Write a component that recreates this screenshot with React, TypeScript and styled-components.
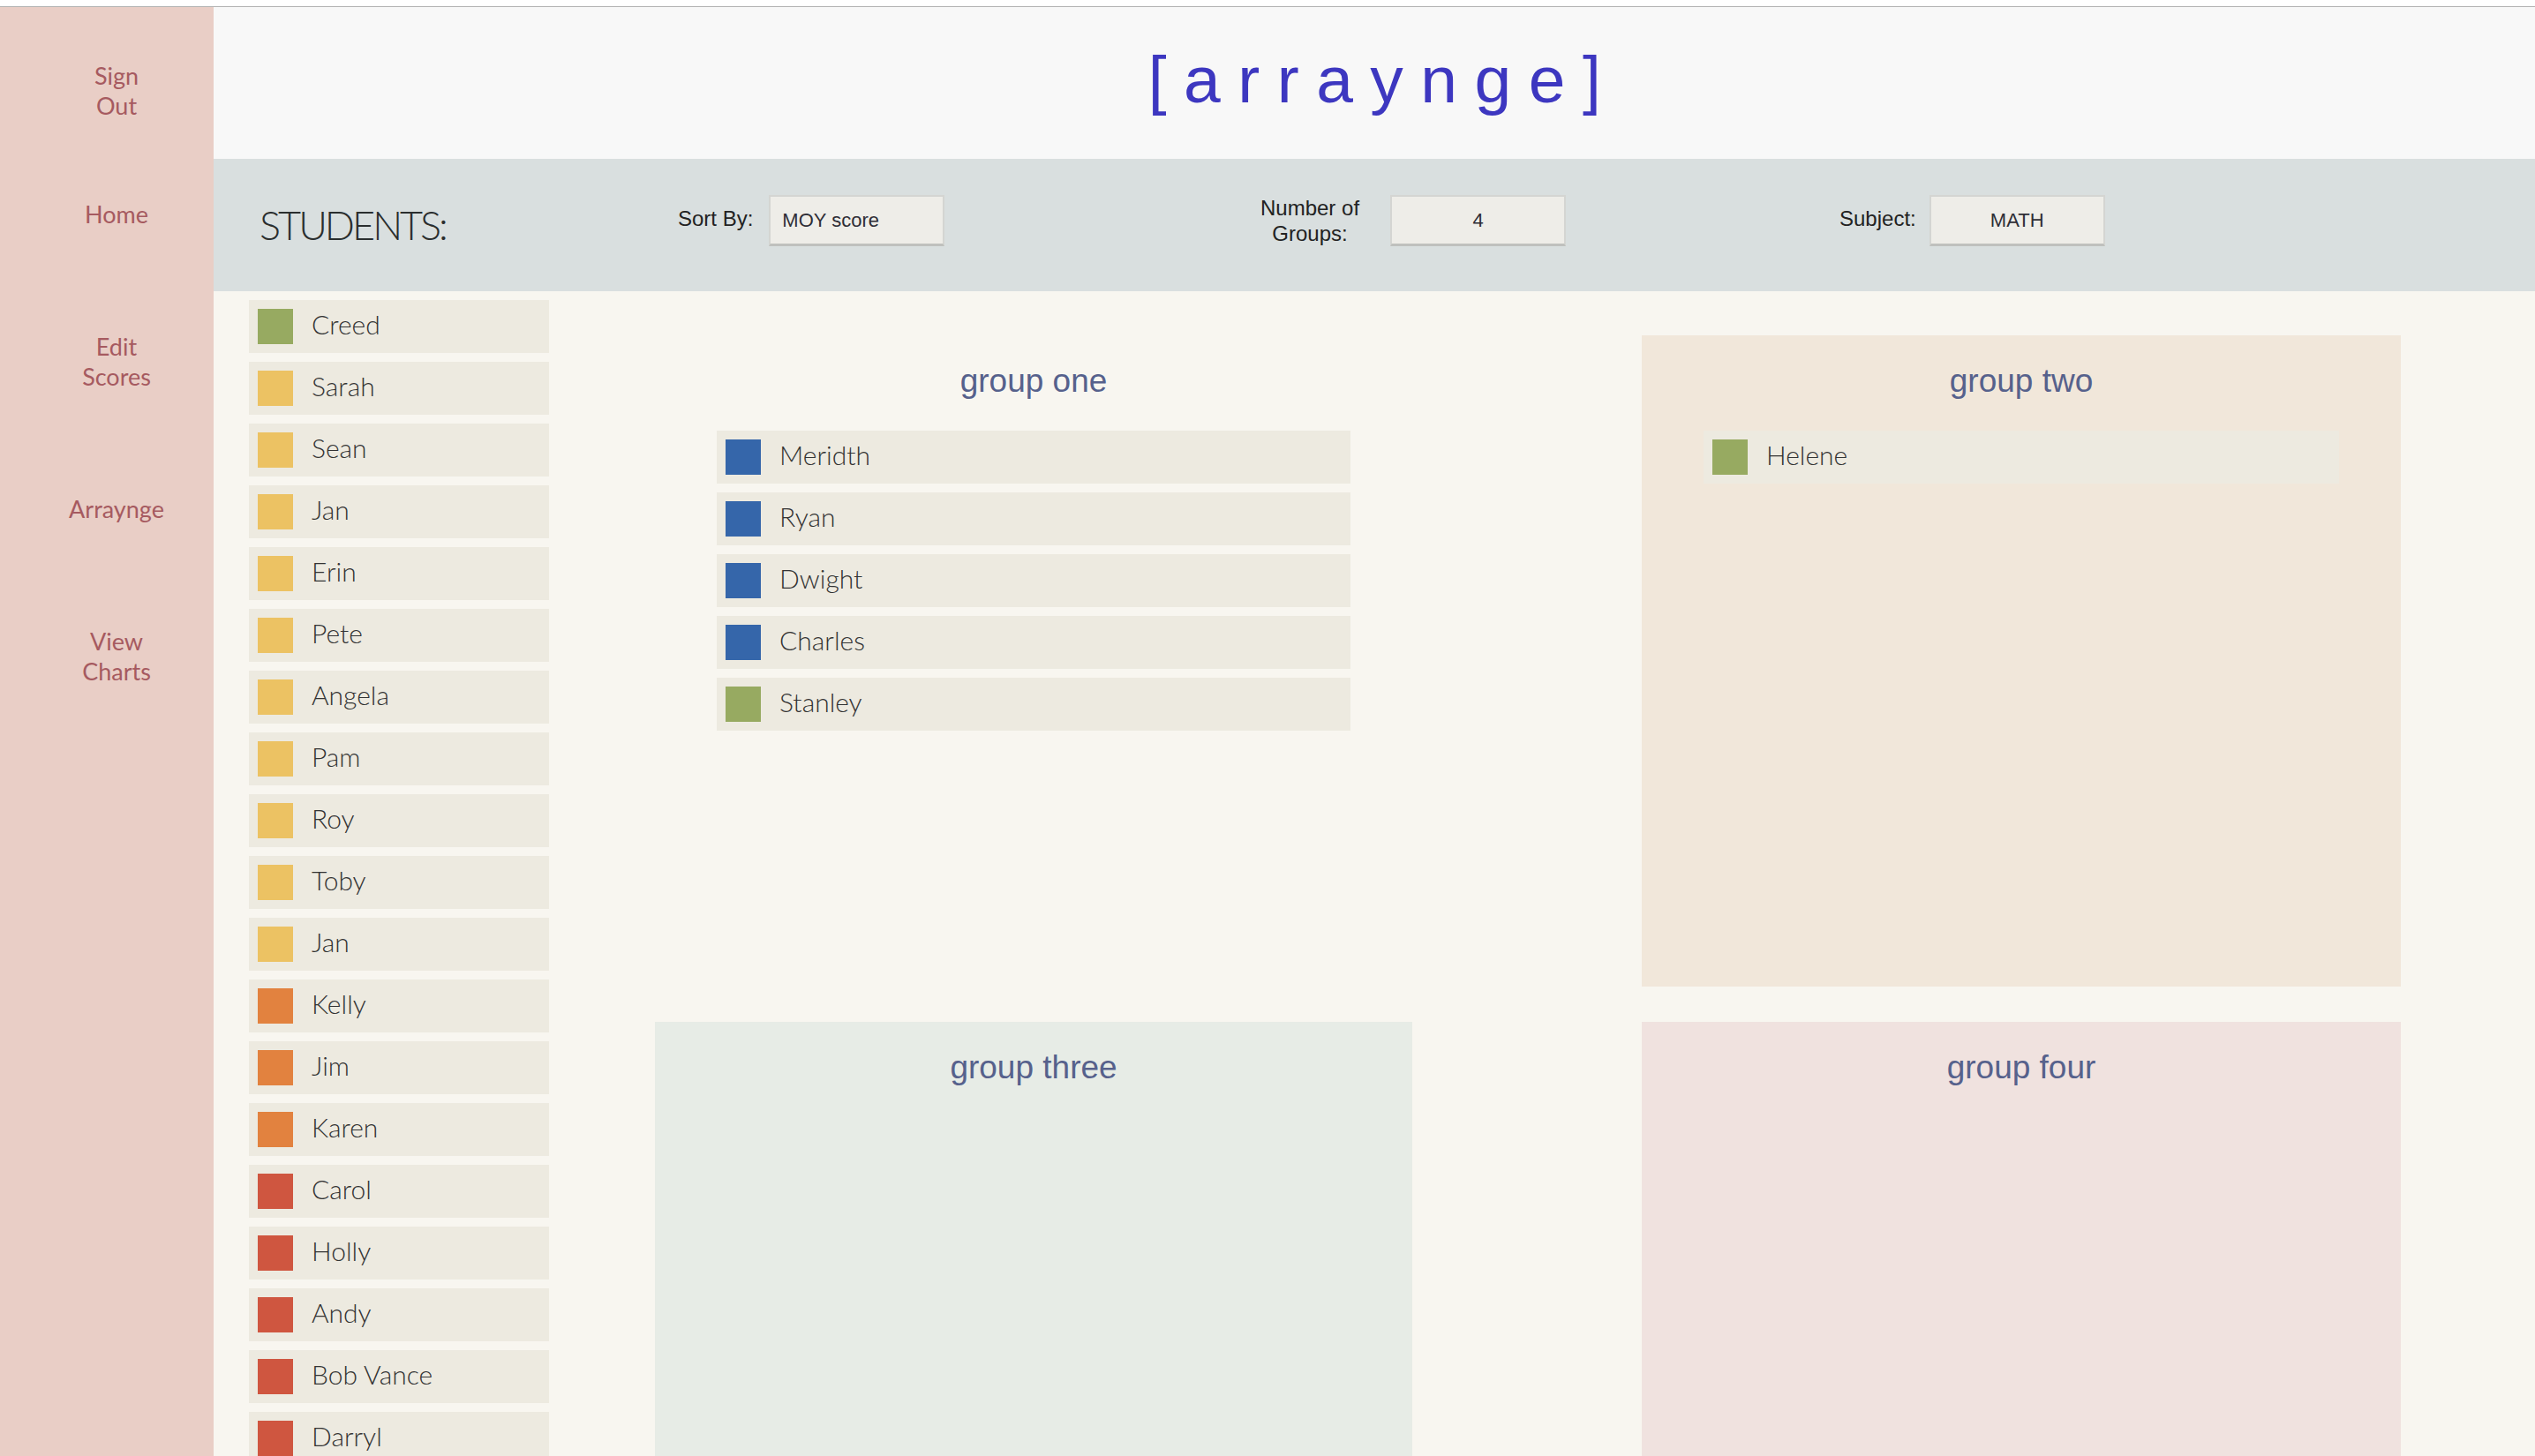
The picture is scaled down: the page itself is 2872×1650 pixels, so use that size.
import React from "react";
import styled, { createGlobalStyle } from "styled-components";

const GlobalStyle = createGlobalStyle`
  html, body {
    margin: 0;
    padding: 0;
    overflow: hidden;
    background: #ffffff;
  }
  * { box-sizing: border-box; }
`;

const COLORS: Record<string, string> = {
  green: "#97aa61",
  yellow: "#ecc263",
  orange: "#e2823f",
  red: "#cf5640",
  blue: "#3566aa",
};

type Student = { name: string; level: keyof typeof COLORS };

const roster: Student[] = [
  { name: "Creed", level: "green" },
  { name: "Sarah", level: "yellow" },
  { name: "Sean", level: "yellow" },
  { name: "Jan", level: "yellow" },
  { name: "Erin", level: "yellow" },
  { name: "Pete", level: "yellow" },
  { name: "Angela", level: "yellow" },
  { name: "Pam", level: "yellow" },
  { name: "Roy", level: "yellow" },
  { name: "Toby", level: "yellow" },
  { name: "Jan", level: "yellow" },
  { name: "Kelly", level: "orange" },
  { name: "Jim", level: "orange" },
  { name: "Karen", level: "orange" },
  { name: "Carol", level: "red" },
  { name: "Holly", level: "red" },
  { name: "Andy", level: "red" },
  { name: "Bob Vance", level: "red" },
  { name: "Darryl", level: "red" },
];

type Group = { title: string; tint: string; members: Student[] };

const groups: Group[] = [
  {
    title: "group one",
    tint: "transparent",
    members: [
      { name: "Meridth", level: "blue" },
      { name: "Ryan", level: "blue" },
      { name: "Dwight", level: "blue" },
      { name: "Charles", level: "blue" },
      { name: "Stanley", level: "green" },
    ],
  },
  {
    title: "group two",
    tint: "#f1e7da",
    members: [{ name: "Helene", level: "green" }],
  },
  { title: "group three", tint: "#e7ece6", members: [] },
  { title: "group four", tint: "#f0e2df", members: [] },
];

const TopRule = styled.div`
  height: 8px;
  background: #ffffff;
  border-bottom: 1px solid #b3b3b3;
`;

const Shell = styled.div`
  display: grid;
  grid-template-columns: 242px 1fr;
  min-height: calc(100vh - 8px);
`;

const Sidebar = styled.nav`
  background: #e9cec6;
  display: flex;
  flex-direction: column;
  align-items: center;
  gap: 116px;
  padding: 61px 0 0 22px;
`;

const NavLink = styled.a<{ $tight?: boolean }>`
  display: block;
  font-family: "Lato", "Liberation Sans", sans-serif;
  font-size: 27px;
  line-height: 34px;
  color: #a65a60;
  text-align: center;
  text-decoration: none;
  cursor: pointer;
  margin-bottom: ${(p) => (p.$tight ? "-27px" : "0")};
`;

const Main = styled.main`
  display: flex;
  flex-direction: column;
  min-width: 0;
`;

const Header = styled.header`
  height: 172px;
  background: #f8f8f8;
  display: flex;
  align-items: center;
  justify-content: center;
`;

const Logo = styled.h1`
  margin: 0;
  padding: 0 0 8px 20px;
  font-family: "Liberation Sans", Arial, sans-serif;
  font-weight: 400;
  font-size: 75px;
  line-height: 1;
  letter-spacing: 19.5px;
  color: #3d37c0;
`;

const Toolbar = styled.section`
  height: 150px;
  background: #d9dfdf;
  display: grid;
  grid-template-columns: 474px 660px 656px auto;
  align-items: center;
  padding-left: 52px;
`;

const SectionTitle = styled.h2`
  margin: 0;
  font-family: "Lato", "Liberation Sans", sans-serif;
  font-weight: 300;
  font-size: 45px;
  letter-spacing: -3px;
  color: #2a2e2e;
`;

const Field = styled.label<{ $gap: number }>`
  display: flex;
  align-items: center;
  gap: ${(p) => p.$gap}px;
  padding-bottom: 10px;
`;

const FieldLabel = styled.span<{ $lift?: boolean }>`
  font-family: "Liberation Sans", Arial, sans-serif;
  font-size: 24px;
  line-height: 29px;
  color: #222;
  text-align: center;
  padding-bottom: ${(p) => (p.$lift ? "6px" : "0")};
`;

const ValueBox = styled.div<{ $align: "left" | "center" }>`
  width: 199px;
  height: 58px;
  background: #eeede8;
  border: 2px solid #d4d5d2;
  border-bottom: 3px solid #bfc0bd;
  display: flex;
  align-items: center;
  justify-content: ${(p) => (p.$align === "left" ? "flex-start" : "center")};
  padding: 0 13px;
  font-family: "Liberation Sans", Arial, sans-serif;
  font-size: 22px;
  color: #2e2e36;
`;

const Content = styled.section`
  flex: 1;
  background: #f8f6f0;
  display: flex;
  align-items: flex-start;
  padding: 10px 0 0 40px;
`;

const StudentColumn = styled.ul`
  list-style: none;
  margin: 0;
  padding: 0;
  width: 340px;
  display: flex;
  flex-direction: column;
  gap: 10px;
`;

const StudentRow = styled.li`
  height: 60px;
  background: #edeae0;
  display: flex;
  align-items: center;
  gap: 21px;
  padding-left: 10px;
  font-family: "Lato", "Liberation Sans", sans-serif;
  font-weight: 300;
  font-size: 30px;
  color: #333333;
`;

const Name = styled.span`
  padding-bottom: 6px;
`;

const Swatch = styled.span<{ $color: string }>`
  width: 40px;
  height: 40px;
  flex: none;
  background: ${(p) => p.$color};
`;

const GroupGrid = styled.div`
  margin: 40px 0 0 120px;
  display: grid;
  grid-template-columns: 858px 860px;
  grid-auto-rows: 738px;
  column-gap: 260px;
  row-gap: 40px;
`;

const GroupPanel = styled.div<{ $tint: string }>`
  background: ${(p) => p.$tint};
  padding: 30px 70px 0;
  display: flex;
  flex-direction: column;
`;

const GroupTitle = styled.h3`
  margin: 0 0 34px;
  font-family: "Liberation Sans", Arial, sans-serif;
  font-weight: 400;
  font-size: 37px;
  line-height: 44px;
  text-align: center;
  color: #56618c;
`;

const GroupList = styled.ul`
  list-style: none;
  margin: 0;
  padding: 0;
  display: flex;
  flex-direction: column;
  gap: 10px;
`;

function StudentItem({ s }: { s: Student }) {
  return (
    <StudentRow>
      <Swatch $color={COLORS[s.level]} />
      <Name>{s.name}</Name>
    </StudentRow>
  );
}

export default function App() {
  return (
    <>
      <GlobalStyle />
      <TopRule />
      <Shell>
        <Sidebar>
          <NavLink $tight>
            Sign
            <br />
            Out
          </NavLink>
          <NavLink>Home</NavLink>
          <NavLink>
            Edit
            <br />
            Scores
          </NavLink>
          <NavLink>Arraynge</NavLink>
          <NavLink>
            View
            <br />
            Charts
          </NavLink>
        </Sidebar>
        <Main>
          <Header>
            <Logo>[arraynge]</Logo>
          </Header>
          <Toolbar>
            <SectionTitle>STUDENTS:</SectionTitle>
            <Field $gap={18}>
              <FieldLabel $lift>Sort By:</FieldLabel>
              <ValueBox $align="left">MOY score</ValueBox>
            </Field>
            <Field $gap={35}>
              <FieldLabel>
                Number of
                <br />
                Groups:
              </FieldLabel>
              <ValueBox $align="center">4</ValueBox>
            </Field>
            <Field $gap={15}>
              <FieldLabel $lift>Subject:</FieldLabel>
              <ValueBox $align="center">MATH</ValueBox>
            </Field>
          </Toolbar>
          <Content>
            <StudentColumn>
              {roster.map((s, i) => (
                <StudentItem key={i} s={s} />
              ))}
            </StudentColumn>
            <GroupGrid>
              {groups.map((g) => (
                <GroupPanel key={g.title} $tint={g.tint}>
                  <GroupTitle>{g.title}</GroupTitle>
                  <GroupList>
                    {g.members.map((s, i) => (
                      <StudentItem key={i} s={s} />
                    ))}
                  </GroupList>
                </GroupPanel>
              ))}
            </GroupGrid>
          </Content>
        </Main>
      </Shell>
    </>
  );
}
